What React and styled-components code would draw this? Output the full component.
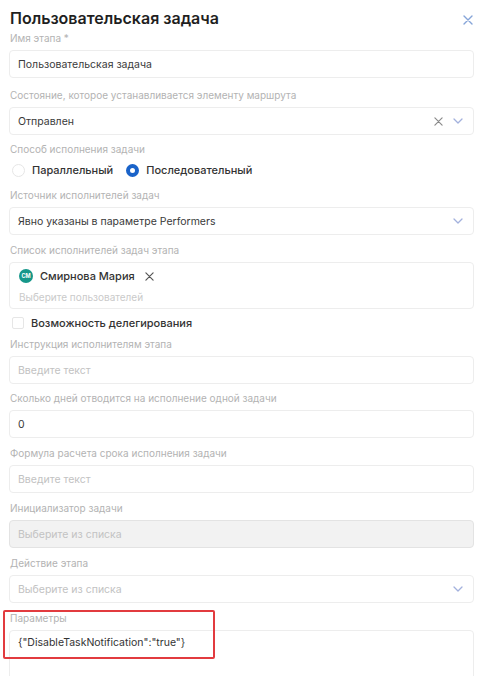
import styled, { createGlobalStyle } from "styled-components";

const Global = createGlobalStyle`
  html, body {
    margin: 0;
    padding: 0;
    background: #ffffff;
    overflow: hidden;
  }
  body {
    font-family: Inter, "Noto Sans", sans-serif;
    color: #333333;
  }
`

const Panel = styled.div`
  padding: 8px 8px 0 9px;
  width: 482px;
  box-sizing: border-box;
`

const Header = styled.div`
  display: flex;
  align-items: center;
  justify-content: space-between;
  height: 20px;
  padding-left: 1px;
`

const Title = styled.h2`
  margin: 0;
  font-size: 16px;
  font-weight: 600;
  color: #1f1f1f;
`

const Close = styled.span`
  display: flex;
  width: 10px;
  height: 10px;
  margin-right: 1px;
  margin-top: 3px;
`

const Field = styled.div`
  position: relative;
  display: flex;
  flex-direction: column;
  margin-top: ${p => p.$top ?? 9}px;
`

const Label = styled.div`
  font-size: 10px;
  line-height: 12px;
  height: 12px;
  color: #b3b3b3;
  padding-left: 1px;
  margin-bottom: 6px;
  white-space: nowrap;
`

const Box = styled.div`
  display: flex;
  align-items: center;
  height: 28px;
  box-sizing: border-box;
  padding: 0 10px 0 8px;
  border: 1px solid #ededed;
  border-radius: 4px;
  background: ${p => (p.$disabled ? "#f2f2f2" : "#ffffff")};
  border-color: ${p => (p.$disabled ? "#e3e3e3" : "#ededed")};
  font-size: 10.5px;
  color: ${p => (p.$placeholder ? "#c2c2c2" : "#3a3a3a")};
`

const Value = styled.span`
  flex: 1;
  white-space: nowrap;
`

const Icons = styled.span`
  display: flex;
  align-items: center;
  gap: 10px;
`

const Options = styled.div`
  display: flex;
  align-items: center;
  height: 20px;
  margin-top: ${p => p.$top ?? 0}px;
  padding-left: 3px;
`

const Option = styled.label`
  display: flex;
  align-items: center;
  gap: 7px;
  margin-right: 13px;
  font-size: 11px;
  font-weight: 500;
  color: #333333;
`

const RadioDot = styled.span`
  width: 13px;
  height: 13px;
  box-sizing: border-box;
  border-radius: 50%;
  border: ${p => (p.$on ? "4px solid #1a63c9" : "1px solid #e6e6e6")};
  background: #fff;
`

const CheckSquare = styled.span`
  width: 12px;
  height: 12px;
  box-sizing: border-box;
  border-radius: 2px;
  border: 1px solid #e6e6e6;
  background: #fff;
`

const MultiBox = styled.div`
  height: 47px;
  box-sizing: border-box;
  border: 1px solid #ededed;
  border-radius: 4px;
  padding: 4px 8px 0 9px;
  display: flex;
  flex-direction: column;
  gap: 4px;
`

const Chip = styled.div`
  display: flex;
  align-items: center;
  height: 18px;
  gap: 8px;
  font-size: 11px;
  font-weight: 500;
  color: #333333;
`

const Avatar = styled.span`
  width: 14px;
  height: 14px;
  border-radius: 50%;
  background: #16978a;
  color: #fff;
  font-size: 5.5px;
  font-weight: 700;
  display: flex;
  align-items: center;
  justify-content: center;
  margin-right: -1px;
`

const ChipRemove = styled.span`
  display: flex;
  margin-left: 2px;
`

const Placeholder = styled.div`
  font-size: 10px;
  line-height: 16px;
  color: #cacaca;
`

const TextArea = styled.div`
  height: 72px;
  box-sizing: border-box;
  border: 1px solid #ededed;
  border-radius: 4px;
  padding: 5px 8px;
  font-size: 10.5px;
  color: #333;
`

const Highlight = styled.div`
  position: absolute;
  left: -6px;
  top: -2px;
  width: 212px;
  height: 49px;
  box-sizing: border-box;
  border: 2px solid #e23b3f;
  border-radius: 2px;
  pointer-events: none;
`

function Cross({ size = 9, color = "#8c8c8c", w = 1.3 }) {
  return (
    <svg width={size} height={size} viewBox="0 0 10 10">
      <path d="M1 1L9 9M9 1L1 9" stroke={color} strokeWidth={w} strokeLinecap="round" />
    </svg>
  )
}

function Chevron() {
  return (
    <svg width="10" height="6" viewBox="0 0 10 6">
      <path d="M1 1L5 5L9 1" fill="none" stroke="#a3b1dd" strokeWidth="1.3" strokeLinecap="round" strokeLinejoin="round" />
    </svg>
  )
}

function TextField({ label, value, placeholder, disabled, top }) {
  return (
    <Field $top={top}>
      <Label>{label}</Label>
      <Box $placeholder={!value} $disabled={disabled}>
        <Value>{value || placeholder}</Value>
      </Box>
    </Field>
  )
}

function SelectField({ label, value, placeholder, clearable, top }) {
  return (
    <Field $top={top}>
      <Label>{label}</Label>
      <Box $placeholder={!value}>
        <Value>{value || placeholder}</Value>
        <Icons>
          {clearable && <Cross size={9} color="#8a8a8a" />}
          <Chevron />
        </Icons>
      </Box>
    </Field>
  )
}

export default function App() {
  return (
    <Panel>
      <Global />
      <Header>
        <Title>Пользовательская задача</Title>
        <Close>
          <Cross size={10} color="#86a5d8" w={1.4} />
        </Close>
      </Header>

      <TextField top={4} label="Имя этапа *" value="Пользовательская задача" />
      <SelectField
        top={11}
        label="Состояние, которое устанавливается элементу маршрута"
        value="Отправлен"
        clearable
      />

      <Field $top={8}>
        <Label>Способ исполнения задачи</Label>
        <Options $top={-1}>
          <Option>
            <RadioDot />
            Параллельный
          </Option>
          <Option>
            <RadioDot $on />
            Последовательный
          </Option>
        </Options>
      </Field>

      <SelectField label="Источник исполнителей задач" value="Явно указаны в параметре Performers" />

      <Field>
        <Label>Список исполнителей задач этапа</Label>
        <MultiBox>
          <Chip>
            <Avatar>СМ</Avatar>
            Смирнова Мария
            <ChipRemove>
              <Cross size={9} color="#555" w={1.3} />
            </ChipRemove>
          </Chip>
          <Placeholder>Выберите пользователей</Placeholder>
        </MultiBox>
        <Options $top={4}>
          <Option>
            <CheckSquare />
            Возможность делегирования
          </Option>
        </Options>
      </Field>

      <TextField top={5} label="Инструкция исполнителям этапа" placeholder="Введите текст" />
      <TextField top={8} label="Сколько дней отводится на исполнение одной задачи" value="0" />
      <TextField label="Формула расчета срока исполнения задачи" placeholder="Введите текст" />
      <TextField label="Инициализатор задачи" placeholder="Выберите из списка" disabled />
      <SelectField label="Действие этапа" placeholder="Выберите из списка" />

      <Field>
        <Label>Параметры</Label>
        <TextArea>{'{"DisableTaskNotification":"true"}'}</TextArea>
        <Highlight />
      </Field>
    </Panel>
  )
}
